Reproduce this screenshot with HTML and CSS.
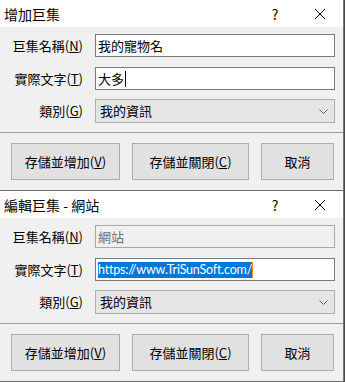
FILE: index.html
```html
<!DOCTYPE html>
<html>
<head>
<meta charset="utf-8">
<link rel="stylesheet" href="styles.css">
</head>
<body>
<div class="dialog">
  <div class="titlebar">
    <span class="title">增加巨集</span>
    <span class="help">?</span>
    <span class="close"><svg width="12" height="12" viewBox="0 0 12 12"><path d="M1 1L11 11M11 1L1 11" stroke="#000" stroke-width="1" fill="none"/></svg></span>
  </div>
  <div class="content">
    <div class="row">
      <label class="lbl">巨集名稱(<u>N</u>)</label>
      <div class="field">我的寵物名</div>
    </div>
    <div class="row">
      <label class="lbl">實際文字(<u>T</u>)</label>
      <div class="field">大多<span class="caret"></span></div>
    </div>
    <div class="row last">
      <label class="lbl">類別(<u>G</u>)</label>
      <div class="select">我的資訊<svg class="chev" width="9" height="5" viewBox="0 0 9 5"><path d="M0.5 0.5L4.5 4.5L8.5 0.5" stroke="#606060" fill="none"/></svg></div>
    </div>
  </div>
  <div class="footer">
    <button class="btn w1">存儲並增加(<u>V</u>)</button>
    <button class="btn w2">存儲並關閉(<u>C</u>)</button>
    <button class="btn w3">取消</button>
  </div>
</div>
<div class="dialog">
  <div class="titlebar">
    <span class="title">編輯巨集 - 網站</span>
    <span class="help">?</span>
    <span class="close"><svg width="12" height="12" viewBox="0 0 12 12"><path d="M1 1L11 11M11 1L1 11" stroke="#000" stroke-width="1" fill="none"/></svg></span>
  </div>
  <div class="content">
    <div class="row">
      <label class="lbl">巨集名稱(<u>N</u>)</label>
      <div class="field disabled">網站</div>
    </div>
    <div class="row">
      <label class="lbl">實際文字(<u>T</u>)</label>
      <div class="field"><span class="sel">https://www.TriSunSoft.com/</span><span class="caret orange"></span></div>
    </div>
    <div class="row last">
      <label class="lbl">類別(<u>G</u>)</label>
      <div class="select">我的資訊<svg class="chev" width="9" height="5" viewBox="0 0 9 5"><path d="M0.5 0.5L4.5 4.5L8.5 0.5" stroke="#606060" fill="none"/></svg></div>
    </div>
  </div>
  <div class="footer">
    <button class="btn w1">存儲並增加(<u>V</u>)</button>
    <button class="btn w2">存儲並關閉(<u>C</u>)</button>
    <button class="btn w3">取消</button>
  </div>
</div>
</body>
</html>
```
FILE: styles.css
```css
* { box-sizing: border-box; }
html, body { margin: 0; padding: 0; }
body {
  background: #4a4a4a;
  width: 345px;
  height: 382px;
  overflow: hidden;
  font-family: "Noto Sans CJK TC", "Noto Sans", sans-serif;
  font-size: 13px;
  color: #000;
}
.dialog {
  width: 344px;
  height: 191px;
  background: #f0f0f0;
  border-right: 1px solid #777;
  border-bottom: 1px solid #6e6e6e;
  display: flex;
  flex-direction: column;
}
.titlebar {
  height: 27px;
  background: #fff;
  display: flex;
  align-items: center;
  padding-left: 4px;
}
.title { flex: 1; font-size: 14px; line-height: 16px; }
.help { width: 20px; text-align: center; font-size: 14px; line-height: 16px; margin-right: 29px; }
.close { width: 12px; height: 12px; margin-right: 17px; display: flex; }
.content {
  padding: 7px 0 10px 0;
  border-bottom: 1px solid #9a9a9a;
}
.row {
  display: flex;
  align-items: center;
  height: 23px;
  margin-bottom: 10px;
}
.row:nth-child(2) { margin-bottom: 9px; }
.row.last { margin-bottom: 0; }
.lbl {
  width: 83px;
  text-align: right;
  line-height: 16px;
}
u { text-decoration: underline; text-underline-offset: 1px; }
.field {
  margin-left: 12px;
  width: 240px;
  height: 23px;
  background: #fff;
  border: 1px solid #7a7a7a;
  padding-left: 2px;
  display: flex;
  align-items: center;
  line-height: 16px;
}
.field.disabled {
  background: #f0f0f0;
  border-color: #a8a8a8;
  color: #6d6d6d;
}
.caret {
  display: inline-block;
  width: 1px;
  height: 16px;
  background: #000;
  margin-left: 1px;
}
.caret.orange { background: #ff8a00; margin-left: 0; }
.sel {
  font-family: Lato, "Noto Sans CJK TC", sans-serif;
  font-size: 12.5px;
  letter-spacing: -0.2px;
  background: #0078d7;
  color: #fff;
  line-height: 16px;
}
.select {
  margin-left: 12px;
  width: 240px;
  height: 24px;
  background: #e5e5e5;
  border: 1px solid #adadad;
  padding-left: 4px;
  display: flex;
  align-items: center;
  line-height: 16px;
  position: relative;
}
.chev { position: absolute; right: 6px; top: 9px; }
.footer {
  flex: 1;
  display: flex;
  align-items: flex-start;
  padding: 10px 0 0 11px;
  gap: 12px;
}
.btn {
  height: 37px;
  background: #e1e1e1;
  border: 1px solid #adadad;
  font-family: inherit;
  font-size: 13px;
  color: #000;
  padding: 0;
  line-height: 16px;
}
.w1 { width: 109px; }
.w2 { width: 117px; }
.w3 { width: 73px; }
```
